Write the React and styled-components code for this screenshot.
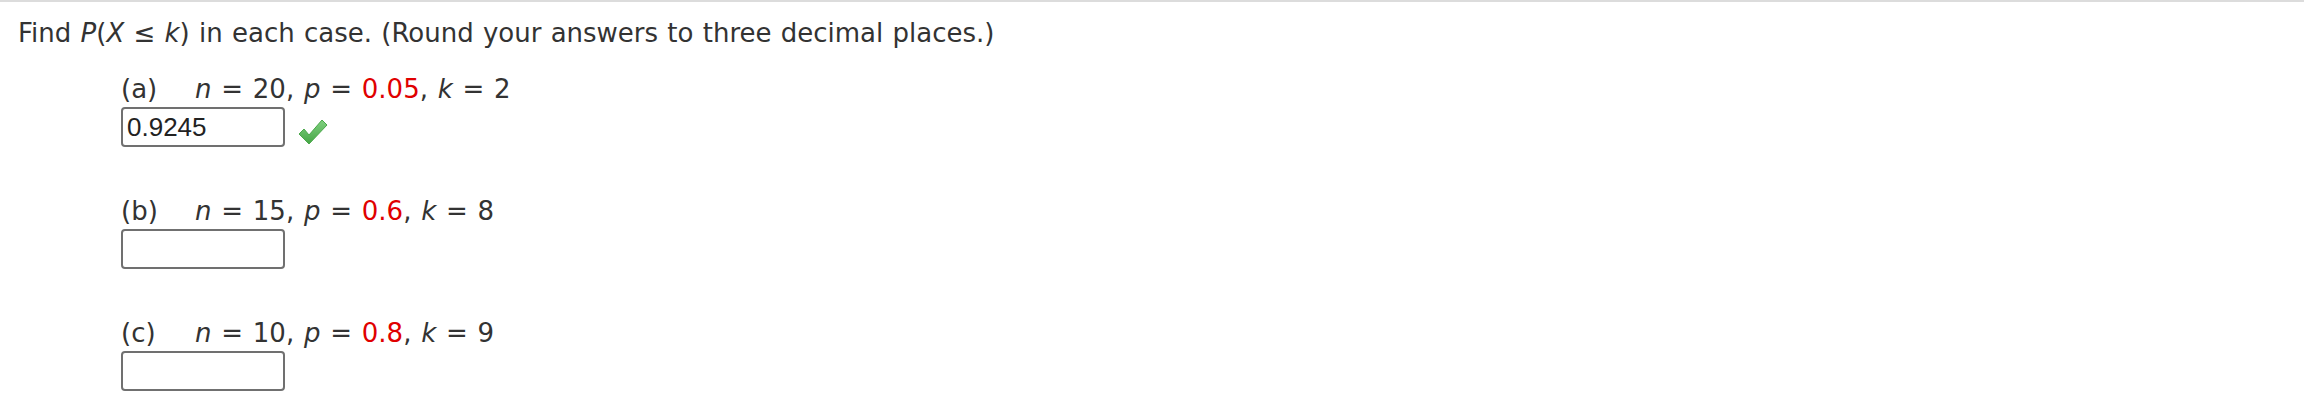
import React from "react";
import styled, { createGlobalStyle } from "styled-components";

const Global = createGlobalStyle`
  html, body { margin: 0; padding: 0; background: #fff; }
  body { font-family: "DejaVu Sans", Verdana, sans-serif; color: #333; }
`;

const Page = styled.div`
  border-top: 2px solid #dcdcdc;
  padding: 13px 0 0 18px;
`;

const Question = styled.p`
  margin: 0;
  font-size: 26px;
  line-height: 36px;
  word-spacing: 1px;
  white-space: nowrap;
`;

const Parts = styled.div`
  margin: 20px 0 0 103px;
  display: flex;
  flex-direction: column;
`;

const Part = styled.div`
  display: flex;
  flex-direction: column;
  margin-bottom: ${(p) => p.$gap}px;
`;

const PartLine = styled.div`
  display: flex;
  font-size: 26px;
  line-height: 36px;
  white-space: pre;
  word-spacing: 1.5px;
`;

const Label = styled.span`
  width: 74px;
  flex: none;
`;

const Var = styled.i`
  font-style: italic;
`;

const Given = styled.span`
  color: #e00000;
`;

const AnswerRow = styled.div`
  display: flex;
  align-items: flex-start;
  gap: 12px;
  height: 40px;
`;

const AnswerBox = styled.input`
  box-sizing: border-box;
  width: 164px;
  height: 40px;
  margin: 0;
  border: 2px solid #707070;
  border-radius: 4px;
  padding: 0 4px;
  font-family: "Liberation Sans", Arial, sans-serif;
  font-size: 26px;
  color: #222;
  background: #fff;
  outline: none;
`;

const CheckIcon = styled.svg`
  flex: none;
  margin-top: 10px;
`;

const Check = () => (
  <CheckIcon width="32" height="30" viewBox="0 0 32 30">
    <defs>
      <linearGradient id="g" x1="0" y1="0" x2="0" y2="1">
        <stop offset="0" stopColor="#80d080" />
        <stop offset="1" stopColor="#45a545" />
      </linearGradient>
    </defs>
    <path
      d="M2 17 L7 12 L12 18 L25 3 L30 8 L12 27 Z"
      fill="url(#g)"
      stroke="#4aa84a"
      strokeWidth="1"
      strokeLinejoin="round"
    />
  </CheckIcon>
);

const parts = [
  { label: "(a)", n: "20", p: "0.05", k: "2", answer: "0.9245", correct: true, gap: 46 },
  { label: "(b)", n: "15", p: "0.6", k: "8", answer: "", correct: false, gap: 46 },
  { label: "(c)", n: "10", p: "0.8", k: "9", answer: "", correct: false, gap: 0 },
];

export default function App() {
  return (
    <>
      <Global />
      <Page>
        <Question>
          Find <Var>P</Var>(<Var>X</Var> ≤ <Var>k</Var>) in each case. (Round your answers to three decimal places.)
        </Question>
        <Parts>
          {parts.map((pt) => (
            <Part key={pt.label} $gap={pt.gap}>
              <PartLine>
                <Label>{pt.label}</Label>
                <span>
                  <Var>n</Var> = {pt.n}, <Var>p</Var> = <Given>{pt.p}</Given>, <Var>k</Var> = {pt.k}
                </span>
              </PartLine>
              <AnswerRow>
                <AnswerBox type="text" defaultValue={pt.answer} />
                {pt.correct && <Check />}
              </AnswerRow>
            </Part>
          ))}
        </Parts>
      </Page>
    </>
  );
}
